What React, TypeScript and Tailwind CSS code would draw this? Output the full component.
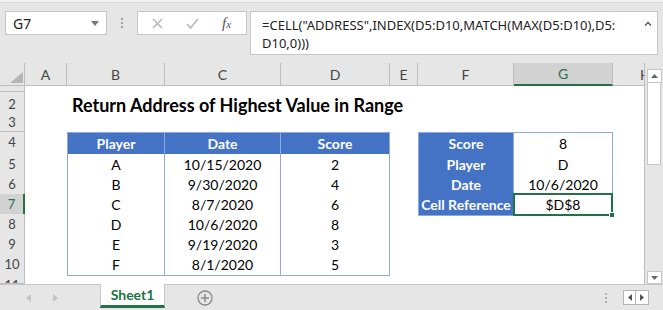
import React from 'react';

const GRID_COLS = 'grid grid-cols-[25px_42px_98px_116px_109px_28px_96px_99px_31px]';
const COL_LETTERS = ['A', 'B', 'C', 'D', 'E', 'F', 'G', 'H'];

type Row = { n: number; h: string };

const ROWS: Row[] = [
  { n: 1, h: 'h-[6px]' },
  { n: 2, h: 'h-[23px]' },
  { n: 3, h: 'h-[17px]' },
  { n: 4, h: 'h-[22px]' },
  { n: 5, h: 'h-[20px]' },
  { n: 6, h: 'h-[20px]' },
  { n: 7, h: 'h-[20px]' },
  { n: 8, h: 'h-[20px]' },
  { n: 9, h: 'h-[20px]' },
  { n: 10, h: 'h-[20px]' },
  { n: 11, h: 'h-[10px]' },
];

const players = [
  ['A', '10/15/2020', '2'],
  ['B', '9/30/2020', '4'],
  ['C', '8/7/2020', '6'],
  ['D', '10/6/2020', '8'],
  ['E', '9/19/2020', '3'],
  ['F', '8/1/2020', '5'],
];

const lookup = [
  ['Score', '8'],
  ['Player', 'D'],
  ['Date', '10/6/2020'],
  ['Cell Reference', '$D$8'],
];

const cellFont = "font-['Lato','Liberation_Sans',sans-serif] text-[14px]";

function TableCell({ text, head, first, top, selected }: { text: string; head?: boolean; first?: boolean; top?: boolean; selected?: boolean }) {
  return (
    <div
      className={`relative flex items-center justify-center border-r border-b border-[#8eaadb] whitespace-nowrap ${first ? 'border-l' : ''} ${top ? 'border-t' : ''} ${head ? 'bg-[#4472c4] text-white font-bold' : 'bg-white text-black'}`}
    >
      {text}
      {selected && (
        <>
          <div className="absolute -inset-[1px] border-2 border-[#217346]" />
          <div className="absolute -right-[3px] -bottom-[3px] w-[6px] h-[6px] bg-[#217346] border border-white" />
        </>
      )}
    </div>
  );
}

function BodyRow({ row }: { row: Row }) {
  const n = row.n;
  const isSel = n === 7;
  const cells: React.ReactNode[] = [];

  for (let c = 0; c < 8; c++) {
    const key = `${n}-${c}`;
    // left table: B..D, rows 4..10
    if (n >= 4 && n <= 10 && c >= 1 && c <= 3) {
      const text = n === 4 ? ['Player', 'Date', 'Score'][c - 1] : players[n - 5][c - 1];
      cells.push(<TableCell key={key} text={text} head={n === 4} first={c === 1} top={n === 4} />);
      continue;
    }
    // right table: F..G, rows 4..7
    if (n >= 4 && n <= 7 && c >= 5 && c <= 6) {
      const text = lookup[n - 4][c - 5];
      cells.push(
        <TableCell key={key} text={text} head={c === 5} first={c === 5} top={n === 4} selected={n === 7 && c === 6} />
      );
      continue;
    }
    if (n === 2 && c === 1) {
      cells.push(
        <div key={key} className="relative z-10 flex items-center pl-[5px] bg-white whitespace-nowrap font-bold text-[18px] text-black">
          Return Address of Highest Value in Range
        </div>
      );
      continue;
    }
    cells.push(<div key={key} className="bg-white" />);
  }

  return (
    <div className={`${GRID_COLS} ${row.h} ${cellFont}`}>
      <div
        className={`flex justify-center overflow-hidden font-['Lato',sans-serif] text-[13px] border-b ${
          isSel ? 'bg-[#d2d2d2] text-[#217346] border-r-2 border-r-[#217346] border-b-[#bdbdbd]' : 'bg-[#e6e6e6] text-[#444] border-r border-[#bdbdbd]'
        } ${n === 11 ? 'items-start pt-[2px]' : 'items-center'}`}
      >
        {n === 1 ? '' : n}
      </div>
      {cells}
    </div>
  );
}

function HeaderRow() {
  return (
    <div className={`${GRID_COLS} h-[23px] font-['Lato',sans-serif] text-[14px]`}>
      <div className="relative bg-[#e6e6e6] border-r border-b border-[#bdbdbd]">
        <svg className="absolute left-[10px] top-[9px]" width="13" height="11" viewBox="0 0 13 11">
          <polygon points="13,0 13,11 0,11" fill="#b4b4b4" />
        </svg>
      </div>
      {COL_LETTERS.map((l) => {
        const sel = l === 'G';
        if (l === 'H') {
          return (
            <div key={l} className="flex items-center overflow-hidden bg-[#e6e6e6] border-b border-[#bdbdbd] text-[#444]">
              <span className="pl-[27px]">H</span>
            </div>
          );
        }
        return (
          <div
            key={l}
            className={`flex items-center justify-center border-r border-[#bdbdbd] ${
              sel ? 'bg-[#d2d2d2] text-[#217346] border-b-2 border-b-[#217346]' : 'bg-[#e6e6e6] text-[#444] border-b'
            }`}
          >
            {l}
          </div>
        );
      })}
    </div>
  );
}

function VScroll() {
  return (
    <div className="w-[18px] flex flex-col items-center pt-[6px] bg-[#e6e6e6]">
      <div className="w-[15px] h-[14px] bg-white border border-[#c6c6c6] flex items-center justify-center">
        <svg width="7" height="4" viewBox="0 0 7 4"><polygon points="0,4 7,4 3.5,0" fill="#666" /></svg>
      </div>
      <div className="w-[14px] h-[82px] bg-white border border-[#c6c6c6] border-t-0" />
      <div className="flex-1" />
      <div className="w-[15px] h-[13px] bg-white border border-[#c6c6c6] flex items-center justify-center">
        <svg width="7" height="4" viewBox="0 0 7 4"><polygon points="0,0 7,0 3.5,4" fill="#666" /></svg>
      </div>
    </div>
  );
}

function FormulaBar() {
  return (
    <div className="h-[63px] relative">
      <div className="h-[3px] bg-[#f2f2f2] border-b border-[#d6d6d6]" />
      <div className="flex items-start pt-[8px] pl-[5px]">
        <div className="w-[102px] h-[24px] bg-white border border-[#c6c6c6] flex items-center justify-between pl-[7px] pr-[7px] font-['Noto_Sans',sans-serif] text-[14px] text-[#222]">
          <span>G7</span>
          <svg width="8" height="5" viewBox="0 0 8 5"><polygon points="0,0 8,0 4,5" fill="#777" /></svg>
        </div>
        <div className="w-[30px] h-[24px] flex flex-col items-center justify-center gap-[2px]">
          <span className="w-[2px] h-[2px] bg-[#a0a0a0]" />
          <span className="w-[2px] h-[2px] bg-[#a0a0a0]" />
          <span className="w-[2px] h-[2px] bg-[#a0a0a0]" />
        </div>
        <div className="w-[110px] h-[24px] bg-white border border-[#c6c6c6] flex items-center">
          <svg className="ml-[14px]" width="11" height="11" viewBox="0 0 11 11">
            <path d="M1 1 L10 10 M10 1 L1 10" stroke="#b8b8b8" strokeWidth="1.5" />
          </svg>
          <svg className="ml-[23px]" width="13" height="11" viewBox="0 0 13 11">
            <path d="M1 6 L4.5 10 L12 1" stroke="#b8b8b8" strokeWidth="1.6" fill="none" />
          </svg>
          <span className="ml-[23px] font-['Liberation_Serif',serif] italic text-[15px] text-[#555] leading-none">
            f<span className="text-[11px]">x</span>
          </span>
        </div>
        <div className="ml-[3px] w-[408px] h-[44px] bg-white border border-[#c6c6c6] relative pl-[11px] pt-[4px] pr-[30px] font-['Noto_Sans',sans-serif] text-[13px] leading-[18px] text-[#222]">
          <div>=CELL("ADDRESS",INDEX(D5:D10,MATCH(MAX(D5:D10),D5:</div>
          <div>D10,0)))</div>
          <svg className="absolute right-[5px] top-[9px]" width="8" height="5" viewBox="0 0 8 5">
            <path d="M1 4.5 L4 1.5 L7 4.5" stroke="#555" strokeWidth="1.4" fill="none" />
          </svg>
        </div>
      </div>
    </div>
  );
}

function BottomBar() {
  return (
    <div className="h-[26px] flex items-start bg-[#e6e6e6] border-t border-[#c6c6c6]">
      <div className="w-[100px] h-full flex items-center pl-[26px] gap-[22px]">
        <svg width="5" height="8" viewBox="0 0 5 8"><polygon points="5,0 5,8 0,4" fill="#c4c4c4" /></svg>
        <svg width="5" height="8" viewBox="0 0 5 8"><polygon points="0,0 0,8 5,4" fill="#c4c4c4" /></svg>
      </div>
      <div className="w-[65px] h-[24px] bg-white border-x border-[#c6c6c6] border-b-[3px] border-b-[#217346] -mt-px flex items-center justify-center font-['Lato',sans-serif] font-bold text-[14px] text-[#217346]">
        Sheet1
      </div>
      <div className="ml-[32px] h-full flex items-center">
        <svg width="16" height="16" viewBox="0 0 16 16">
          <circle cx="8" cy="8" r="7" stroke="#8a8a8a" strokeWidth="1.3" fill="none" />
          <path d="M8 4 V12 M4 8 H12" stroke="#8a8a8a" strokeWidth="1.5" />
        </svg>
      </div>
      <div className="flex-1" />
      <div className="h-full flex items-center gap-[2px] mr-[14px]">
        <div className="flex flex-col gap-[2px] mr-[14px]">
          <span className="w-[2px] h-[2px] bg-[#b0b0b0]" />
          <span className="w-[2px] h-[2px] bg-[#b0b0b0]" />
          <span className="w-[2px] h-[2px] bg-[#b0b0b0]" />
        </div>
        <div className="flex h-[15px] border border-[#b4b4b4] bg-white">
          <div className="w-[12px] flex items-center justify-center border-r border-[#b4b4b4]">
            <svg width="4" height="7" viewBox="0 0 4 7"><polygon points="4,0 4,7 0,3.5" fill="#555" /></svg>
          </div>
          <div className="w-[12px] flex items-center justify-center">
            <svg width="4" height="7" viewBox="0 0 4 7"><polygon points="0,0 0,7 4,3.5" fill="#555" /></svg>
          </div>
        </div>
      </div>
    </div>
  );
}

export default function App() {
  return (
    <div className="w-[663px] h-[310px] overflow-hidden bg-[#e6e6e6] flex flex-col">
      <FormulaBar />
      <div className="flex h-[221px]">
        <div className="w-[645px] border-r border-[#bdbdbd] overflow-hidden">
          <HeaderRow />
          {ROWS.map((r) => (
            <BodyRow key={r.n} row={r} />
          ))}
        </div>
        <VScroll />
      </div>
      <BottomBar />
    </div>
  );
}
